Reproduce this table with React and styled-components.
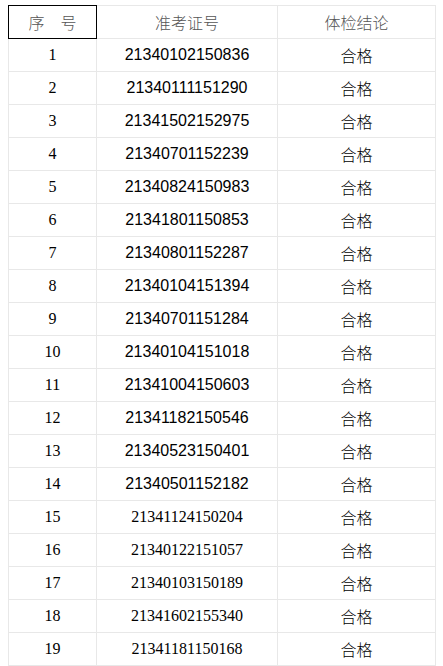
import React from 'react'
import styled, { createGlobalStyle } from 'styled-components'

const rows = [
    ['21340102150836', 'sans'],
    ['21340111151290', 'sans'],
    ['21341502152975', 'sans'],
    ['21340701152239', 'sans'],
    ['21340824150983', 'sans'],
    ['21341801150853', 'sans'],
    ['21340801152287', 'sans'],
    ['21340104151394', 'sans'],
    ['21340701151284', 'sans'],
    ['21340104151018', 'sans'],
    ['21341004150603', 'sans'],
    ['21341182150546', 'sans'],
    ['21340523150401', 'sans'],
    ['21340501152182', 'sans'],
    ['21341124150204', 'serif'],
    ['21340122151057', 'serif'],
    ['21340103150189', 'serif'],
    ['21341602155340', 'serif'],
    ['21341181150168', 'serif'],
]

const GlobalStyle = createGlobalStyle`
    body {
        margin: 5px 0 0 8px;
        background: #fff;
        font-family: "Liberation Sans", "Noto Sans CJK SC", sans-serif;
    }
`

const App = () => {
    return (
        <>
            <GlobalStyle />
            <Table>
                <colgroup>
                    <col style={{ width: 88 }} />
                    <col style={{ width: 181 }} />
                    <col style={{ width: 158 }} />
                </colgroup>
                <thead>
                    <tr>
                        <HeadCell $boxed>序　号</HeadCell>
                        <HeadCell>准考证号</HeadCell>
                        <HeadCell>体检结论</HeadCell>
                    </tr>
                </thead>
                <tbody>
                    {rows.map(([id, face], i) => (
                        <tr key={id}>
                            <Cell $face="serif">{i + 1}</Cell>
                            <Cell $face={face}>{id}</Cell>
                            <Cell $face="cjk">合格</Cell>
                        </tr>
                    ))}
                </tbody>
            </Table>
        </>
    )
}

const fonts = {
    sans: '"Liberation Sans", Arial, sans-serif',
    serif: '"Liberation Serif", "Noto Sans CJK SC", serif',
    cjk: '"Noto Sans CJK SC", sans-serif',
}

const Table = styled.table`
    border-collapse: collapse;
    table-layout: fixed;
    width: 428px;
    td, th {
        border: 1px solid #e8e8e8;
        padding: 0;
        height: 32px;
        text-align: center;
        vertical-align: middle;
    }
`

const HeadCell = styled.th`
    font-family: "Noto Sans CJK SC", sans-serif;
    font-weight: 300;
    font-size: 16px;
    color: #555;
    ${p => p.$boxed && 'border: 1px solid #000 !important;'}
`

const Cell = styled.td`
    font-family: ${p => fonts[p.$face]};
    font-weight: ${p => (p.$face === 'cjk' ? 300 : 400)};
    font-size: 16px;
    color: #000;
`

export default App
